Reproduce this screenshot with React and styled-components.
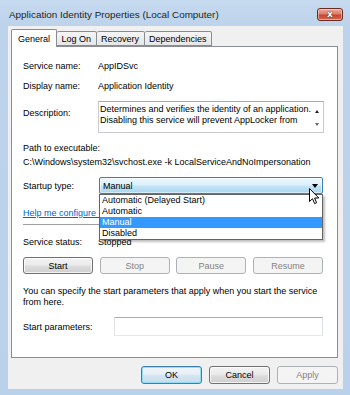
import React from 'react';
import styled, { createGlobalStyle } from 'styled-components';

const Global = createGlobalStyle`
  html, body { margin: 0; padding: 0; background: #b9d1ea; }
  body { font-family: "Liberation Sans", Arial, sans-serif; font-size: 9px; color: #000; }
  #root { width: 350px; height: 395px; }
`;

const Window = styled.div`
  width: 350px;
  height: 395px;
  box-sizing: border-box;
  background: linear-gradient(#c6daef 0px, #bcd3eb 26px, #b9d1ea 100%);
  display: flex;
  flex-direction: column;
  overflow: hidden;
`;

const TitleBar = styled.div`
  height: 26px;
  flex: none;
  box-sizing: border-box;
  padding: 2px 7px 0 9px;
  display: flex;
  align-items: center;
  justify-content: space-between;
`;

const Title = styled.div`
  font-size: 9.9px;
  color: #1e1e1e;
  white-space: nowrap;
`;

const CloseButton = styled.div`
  width: 26px;
  height: 13px;
  box-sizing: border-box;
  border: 1px solid #6b2a24;
  border-radius: 3px;
  background: linear-gradient(#e9a99a 0%, #dc7e6d 45%, #c8432f 55%, #d06a52 100%);
  box-shadow: inset 0 0 0 1px rgba(255, 220, 210, 0.55);
  display: flex;
  align-items: center;
  justify-content: center;
  color: #fff;
  font-family: "DejaVu Sans", sans-serif;
  font-weight: bold;
  font-size: 9px;
  line-height: 1;
  text-shadow: 0 0 1px #5a1a12, 0 0 1px #5a1a12;
`;

const Client = styled.div`
  flex: 1;
  margin: 0 7px 6px 8px;
  background: #f0f0f0;
  display: flex;
  flex-direction: column;
  padding-top: 3px;
  min-height: 0;
`;

const TabStrip = styled.div`
  display: flex;
  align-items: flex-end;
  height: 18px;
  margin: 0 5px -1px 3px;
  position: relative;
  z-index: 1;
`;

const Tab = styled.div`
  box-sizing: border-box;
  height: ${p => (p.$active ? 18 : 15)}px;
  margin-bottom: ${p => (p.$active ? 0 : 1)}px;
  padding: ${p => (p.$active ? '0 6px' : '0 4.5px')};
  border: 1px solid #898c95;
  border-bottom: ${p => (p.$active ? 'none' : '1px solid #898c95')};
  border-left: ${p => (p.$first || p.$active ? '1px solid #898c95' : 'none')};
  border-radius: 2px 2px 0 0;
  background: ${p => (p.$active ? '#fff' : 'linear-gradient(#f5f5f5, #e6e6e6)')};
  display: flex;
  align-items: ${p => (p.$active ? 'flex-start' : 'center')};
  padding-top: ${p => (p.$active ? 3 : 0)}px;
  white-space: nowrap;
  line-height: 12px;
`;

const Panel = styled.div`
  flex: 1;
  margin: 0 5px 0 3px;
  border: 1px solid #898c95;
  background: #fff;
  padding: 0 14px 0 11px;
  display: flex;
  flex-direction: column;
  min-height: 0;
`;

const Row = styled.div`
  display: flex;
  align-items: ${p => p.$align || 'center'};
  margin-top: ${p => p.$mt || 0}px;
  min-height: ${p => p.$h || 12}px;
  position: relative;
  z-index: ${p => p.$z || 'auto'};
`;

const Label = styled.div`
  width: ${p => p.$w || 75}px;
  flex: none;
  line-height: 12px;
  padding-top: ${p => p.$pt || 0}px;
  white-space: nowrap;
`;

const Text = styled.div`
  line-height: 12px;
  white-space: nowrap;
`;

const DescBox = styled.div`
  flex: 1;
  height: 32px;
  box-sizing: border-box;
  border: 1px solid #c9cbd0;
  border-top-color: #a9abb1;
  background: #fff;
  display: flex;
`;

const DescText = styled.div`
  flex: 1;
  padding: 2px 0 0 1px;
  line-height: 11px;
  white-space: nowrap;
  overflow: hidden;
`;

const ScrollBar = styled.div`
  width: 12px;
  flex: none;
  display: flex;
  flex-direction: column;
  align-items: center;
  justify-content: space-between;
  padding: 8px 0 6px;
`;

const Arrow = styled.div`
  width: 0;
  height: 0;
  border-left: 2.5px solid transparent;
  border-right: 2.5px solid transparent;
  ${p =>
    p.$up
      ? `border-bottom: 3px solid ${p.$color || '#222'};`
      : `border-top: 3px solid ${p.$color || '#222'};`}
`;

const Combo = styled.div`
  position: relative;
  flex: 1;
  height: 17px;
  box-sizing: border-box;
  border: 1px solid #3c7fb1;
  border-radius: 2px;
  background: linear-gradient(#ecf7fd 0%, #dcf0fb 45%, #c2e4f6 55%, #a9d6f0 100%);
  box-shadow: inset 0 0 0 1px rgba(255, 255, 255, 0.5);
  display: flex;
  align-items: center;
  padding-left: 3px;
  line-height: 12px;
`;

const ComboArrow = styled.div`
  position: absolute;
  right: 4px;
  top: 6px;
  width: 0;
  height: 0;
  border-left: 3.5px solid transparent;
  border-right: 3.5px solid transparent;
  border-top: 4px solid #000;
`;

const DropList = styled.div`
  position: absolute;
  top: calc(100% + 1px);
  left: -1px;
  right: -1px;
  background: #fff;
  border: 1px solid #646464;
  box-shadow: 2px 2px 2px rgba(0, 0, 0, 0.25);
  z-index: 5;
`;

const DropItem = styled.div`
  height: 11px;
  line-height: 11px;
  padding-left: 2px;
  white-space: nowrap;
  background: ${p => (p.$selected ? '#3399ff' : 'transparent')};
  color: ${p => (p.$selected ? '#fff' : '#000')};
`;

const Cursor = styled.svg`
  position: absolute;
  right: 2px;
  top: 10px;
  z-index: 6;
`;

const Link = styled.a`
  color: #0066cc;
  text-decoration: underline;
  line-height: 12px;
  white-space: nowrap;
  cursor: pointer;
`;

const Separator = styled.div`
  height: 1px;
  background: #a0a0a0;
  margin-top: ${p => p.$mt}px;
`;

const ButtonRow = styled.div`
  display: flex;
  justify-content: space-between;
  margin-top: ${p => p.$mt}px;
`;

const Button = styled.div`
  width: ${p => p.$w || 70}px;
  height: ${p => p.$h || 17}px;
  box-sizing: border-box;
  border: 1px solid ${p => (p.$disabled ? '#adb2b5' : p.$default ? '#3c7fb1' : '#707070')};
  border-radius: 3px;
  background: ${p =>
    p.$disabled
      ? '#f4f4f4'
      : p.$default
      ? 'linear-gradient(#eef6fb 0%, #e6eff6 45%, #d5e3ee 55%, #c9dceb 100%)'
      : 'linear-gradient(#f2f2f2 0%, #ebebeb 45%, #dddddd 55%, #cfcfcf 100%)'};
  box-shadow: ${p =>
    p.$disabled
      ? 'none'
      : p.$default
      ? 'inset 0 0 0 1px #8fdcf9'
      : 'inset 0 0 0 1px rgba(255,255,255,0.75)'};
  color: ${p => (p.$disabled ? '#838383' : '#000')};
  display: flex;
  align-items: center;
  justify-content: center;
  line-height: 12px;
`;

const Paragraph = styled.div`
  margin-top: ${p => p.$mt}px;
  line-height: 11px;
  white-space: nowrap;
`;

const Input = styled.div`
  flex: 1;
  height: 19px;
  box-sizing: border-box;
  border: 1px solid #dbdfe6;
  border-top-color: #abadb3;
  border-left-color: #e2e3ea;
  border-bottom-color: #e3e9ef;
  background: #fff;
`;

const DialogButtons = styled.div`
  display: flex;
  justify-content: flex-end;
  gap: 7px;
  margin: 8px 5px 5px 0;
`;

export default function App() {
  return (
    <>
      <Global />
      <Window>
        <TitleBar>
          <Title>Application Identity Properties (Local Computer)</Title>
          <CloseButton>x</CloseButton>
        </TitleBar>
        <Client>
          <TabStrip>
            <Tab $active $first>General</Tab>
            <Tab>Log On</Tab>
            <Tab>Recovery</Tab>
            <Tab>Dependencies</Tab>
          </TabStrip>
          <Panel>
            <Row $mt={13}>
              <Label>Service name:</Label>
              <Text>AppIDSvc</Text>
            </Row>
            <Row $mt={8}>
              <Label>Display name:</Label>
              <Text>Application Identity</Text>
            </Row>
            <Row $mt={9} $align="flex-start" $h={32}>
              <Label $pt={6}>Description:</Label>
              <DescBox>
                <DescText>
                  Determines and verifies the identity of an application.
                  <br />
                  Disabling this service will prevent AppLocker from
                </DescText>
                <ScrollBar>
                  <Arrow $up />
                  <Arrow $color="#666" />
                </ScrollBar>
              </DescBox>
            </Row>
            <Row $mt={9}>
              <Text>Path to executable:</Text>
            </Row>
            <Row $mt={2}>
              <Text>C:\Windows\system32\svchost.exe -k LocalServiceAndNoImpersonation</Text>
            </Row>
            <Row $mt={9} $h={17} $z={4}>
              <Label $w={76}>Startup type:</Label>
              <Combo>
                Manual
                <ComboArrow />
                <DropList>
                  <DropItem>Automatic (Delayed Start)</DropItem>
                  <DropItem>Automatic</DropItem>
                  <DropItem $selected>Manual</DropItem>
                  <DropItem>Disabled</DropItem>
                </DropList>
                <Cursor width="11" height="17" viewBox="0 0 11 17">
                  <path
                    d="M0.5 0.5 L0.5 13.5 L3.5 10.7 L5.6 15.6 L7.6 14.7 L5.6 10 L9.8 10 Z"
                    fill="#fff"
                    stroke="#000"
                    strokeWidth="1"
                    strokeLinejoin="miter"
                  />
                </Cursor>
              </Combo>
            </Row>
            <Row $mt={13}>
              <Link>Help me configure service startup options.</Link>
            </Row>
            <Separator $mt={5} />
            <Row $mt={11}>
              <Label>Service status:</Label>
              <Text>Stopped</Text>
            </Row>
            <ButtonRow $mt={9}>
              <Button>Start</Button>
              <Button $disabled>Stop</Button>
              <Button $disabled>Pause</Button>
              <Button $disabled>Resume</Button>
            </ButtonRow>
            <Paragraph $mt={12}>
              You can specify the start parameters that apply when you start the service
              <br />
              from here.
            </Paragraph>
            <Row $mt={9} $h={19}>
              <Label $w={91}>Start parameters:</Label>
              <Input />
            </Row>
          </Panel>
          <DialogButtons>
            <Button $w={61} $h={18} $default>OK</Button>
            <Button $w={61} $h={18}>Cancel</Button>
            <Button $w={61} $h={18} $disabled>Apply</Button>
          </DialogButtons>
        </Client>
      </Window>
    </>
  );
}
